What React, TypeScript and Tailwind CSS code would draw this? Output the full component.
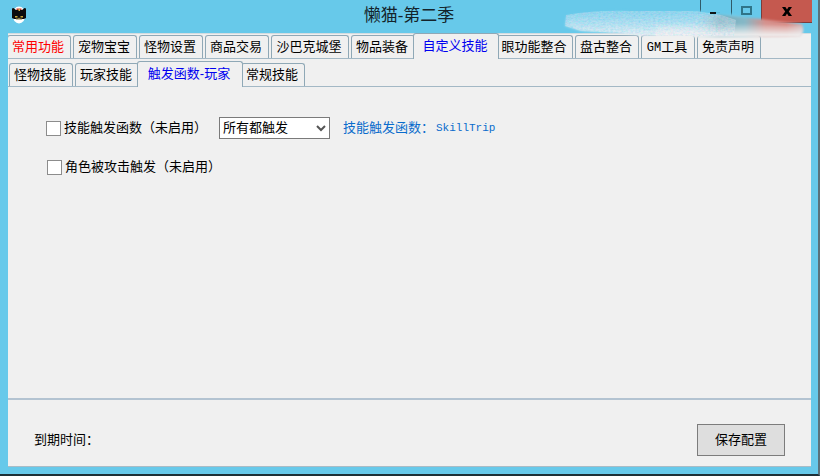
import { useState } from "react";
import type { ReactNode } from "react";
import clsx from "clsx";

type TabItem = {
  id: string;
  label: ReactNode;
  width: string;
  activeWidth: string;
  red?: boolean;
};

const MAIN_TABS: TabItem[] = [
  { id: "common", label: "常用功能", width: "w-16", activeWidth: "w-18", red: true },
  { id: "pet", label: "宠物宝宝", width: "w-16", activeWidth: "w-18" },
  { id: "monster", label: "怪物设置", width: "w-16", activeWidth: "w-18" },
  { id: "trade", label: "商品交易", width: "w-16", activeWidth: "w-18" },
  { id: "castle", label: "沙巴克城堡", width: "w-[78px]", activeWidth: "w-[86px]" },
  { id: "gear", label: "物品装备", width: "w-16", activeWidth: "w-18" },
  { id: "custom", label: "自定义技能", width: "w-[78px]", activeWidth: "w-[86px]" },
  { id: "eye", label: "眼功能整合", width: "w-[76px]", activeWidth: "w-[84px]" },
  { id: "pangu", label: "盘古整合", width: "w-16", activeWidth: "w-18" },
  {
    id: "gm",
    label: (
      <>
        <span className="font-['Liberation_Mono',monospace] text-[12px]">GM</span>工具
      </>
    ),
    width: "w-[54px]",
    activeWidth: "w-[62px]",
  },
  { id: "notice", label: "免责声明", width: "w-16", activeWidth: "w-18" },
];

const SKILL_TABS: TabItem[] = [
  { id: "monster", label: "怪物技能", width: "w-16", activeWidth: "w-18" },
  { id: "player", label: "玩家技能", width: "w-16", activeWidth: "w-18" },
  { id: "trigger", label: "触发函数-玩家", width: "w-[98px]", activeWidth: "w-[106px]" },
  { id: "normal", label: "常规技能", width: "w-16", activeWidth: "w-18" },
];

function TabStrip({
  items,
  initial,
  label,
  className,
}: {
  items: TabItem[];
  initial: string;
  label: string;
  className?: string;
}) {
  const [active, setActive] = useState(initial);

  return (
    <div
      role="tablist"
      aria-label={label}
      className={clsx("flex items-end gap-0.5 border-b border-[#a3b8c5]", className)}
    >
      {items.map((t) => {
        const on = t.id === active;
        return (
          <button
            key={t.id}
            type="button"
            role="tab"
            aria-selected={on}
            onClick={() => setActive(t.id)}
            className={clsx(
              "shrink-0 rounded-t-[3px] border border-b-0 border-[#8fa8b6] bg-[#f0f0f0] pr-0.5 text-center whitespace-nowrap",
              // the selected tab grows over its neighbours and hides the strip's line
              on ? "z-10 -mx-1 -mb-px h-[26px] pb-0.5" : "h-[23px]",
              on ? t.activeWidth : t.width,
              on ? "text-[#0000f0]" : t.red ? "text-[#ff0000]" : "text-black",
            )}
          >
            {t.label}
          </button>
        );
      })}
    </div>
  );
}

function CatIcon() {
  return (
    <svg viewBox="0 0 16 18" className="h-[18px] w-4" aria-hidden="true">
      <ellipse cx="8" cy="9" rx="6.5" ry="8.5" fill="#fff" />
      <path d="M1 2.5 2.5 2l2.5 2h6l2.5-2 1.5.5V12l-2 1H3l-2-1z" fill="#0b0b0d" />
      <path d="M5.5 2.5h5v1.5h-5z" fill="#c23a2a" />
      <path d="M7.5 3h1.5v2H7.5z" fill="#e0b04a" />
      <path d="M4 10h2.5v1.5H4zM9.5 10H12v1.5H9.5z" fill="#c9a63a" />
      <path d="M5 12.5h1.5l1.5-1 1.5 1H11v1H5z" fill="#8a7a40" />
    </svg>
  );
}

// smudged streak that runs under the window buttons
function BrushStroke() {
  return (
    <svg
      viewBox="0 0 250 34"
      className="pointer-events-none absolute top-[6px] right-[12px] z-20 h-[34px] w-[250px]"
      aria-hidden="true"
    >
      <defs>
        <linearGradient id="stroke-left" x1="0" y1="0" x2="0" y2="1">
          <stop offset="0.1" stopColor="#67c9ea" />
          <stop offset="0.5" stopColor="#93d8ee" />
          <stop offset="1" stopColor="#e6eff2" />
        </linearGradient>
        <linearGradient id="stroke-right" x1="0" x2="1">
          <stop offset="0" stopColor="#a5d6e5" stopOpacity="0" />
          <stop offset="0.25" stopColor="#76adbd" />
          <stop offset="0.48" stopColor="#86b8c7" />
          <stop offset="0.66" stopColor="#d5928e" />
          <stop offset="0.85" stopColor="#d98983" />
          <stop offset="1" stopColor="#cdb5b8" />
        </linearGradient>
        <linearGradient id="stroke-fade" x1="0" y1="0" x2="0" y2="1">
          <stop offset="0" stopColor="#f0f0f0" stopOpacity="0" />
          <stop offset="0.85" stopColor="#f0f0f0" stopOpacity="0.95" />
        </linearGradient>
        <filter id="stroke-soft" x="-5%" y="-20%" width="110%" height="140%">
          <feGaussianBlur stdDeviation="1.2" />
        </filter>
        <filter id="stroke-grain" x="0" y="0" width="100%" height="100%">
          <feTurbulence type="fractalNoise" baseFrequency="0.4 0.6" numOctaves="3" seed="11" />
          <feColorMatrix values="1.2 0 0 0 0.1  0 0.6 0 0 0.5  0 0 0.4 0 0.7  0 0 0 0 0.38" />
          <feComposite in2="SourceGraphic" operator="in" />
        </filter>
      </defs>
      <path
        d="M10 9Q40 4 75 5L165 5 190 12 190 30 90 30 60 27 25 25 9 20Z"
        fill="url(#stroke-left)"
        filter="url(#stroke-soft)"
      />
      <path
        d="M135 9 165 9 205 13 246 18Q249 24 244 30L135 31Z"
        fill="url(#stroke-right)"
        filter="url(#stroke-soft)"
      />
      <path
        d="M100 17 165 17 246 20Q249 26 244 31L100 31Z"
        fill="url(#stroke-fade)"
        filter="url(#stroke-soft)"
      />
      <path
        d="M10 9Q40 4 75 5L140 5 165 9 180 14 178 30 90 30 60 27 25 25 9 20Z"
        fill="#fff"
        filter="url(#stroke-grain)"
      />
      <path d="M154 6h6v2h-6z" fill="#101416" />
    </svg>
  );
}

function TitleBar() {
  return (
    <header className="relative flex h-[33px] shrink-0 justify-center">
      <div className="absolute top-[6px] left-[11px]">
        <CatIcon />
      </div>
      <h1 className="text-[17px] leading-8 text-[#14242b]">懒猫-第二季</h1>
      <div className="absolute top-0 right-1.5 flex h-[23px]">
        <button
          type="button"
          aria-label="最小化"
          className="flex w-[31px] justify-center border-l border-[#2f5a69] pt-3"
        >
          <span className="h-0.5 w-2 bg-black" />
        </button>
        <button
          type="button"
          aria-label="最大化"
          className="flex w-[30px] justify-center border-l border-[#2f5a69] pt-1.5"
        >
          <span className="h-[9px] w-[11px] border-2 border-[#2f7488]" />
        </button>
        <button
          type="button"
          aria-label="关闭"
          className="flex w-[51px] items-center justify-center border-b border-l border-[#7a3d3c] bg-[#c5594f]"
        >
          <svg viewBox="0 0 10 9" className="h-[9px] w-2.5" aria-hidden="true">
            <path
              d="M0 0h3.4L5 2.6 6.6 0H10L6.8 4.5 10 9H6.6L5 6.4 3.4 9H0l3.2-4.5z"
              fill="#000"
            />
          </svg>
        </button>
      </div>
      <BrushStroke />
    </header>
  );
}

const CHECKBOX =
  "size-[15px] shrink-0 appearance-none border border-[#8c8c8c] bg-white checked:bg-[#0a6cce]";

function TriggerPanel() {
  return (
    <section className="flex min-h-0 flex-1 flex-col items-start gap-[18px] pt-[30px] pl-[38px]">
      <div className="flex items-center">
        <label className="flex w-[173px] items-center gap-[3px] whitespace-nowrap">
          <input type="checkbox" className={CHECKBOX} />
          技能触发函数（未启用）
        </label>
        <div className="relative flex items-center">
          <select
            aria-label="触发方式"
            className="h-[22px] w-[111px] appearance-none border border-[#7a7a7a] bg-white pl-[3px] leading-5 text-black"
          >
            <option>所有都触发</option>
          </select>
          <svg
            viewBox="0 0 10 7"
            className="pointer-events-none absolute right-1 h-[7px] w-2.5"
            fill="none"
            stroke="#555"
            strokeWidth="2"
            aria-hidden="true"
          >
            <path d="m1 1 4 4 4-4" />
          </svg>
        </div>
        <span className="ml-[13px] flex items-center whitespace-nowrap text-[#0a6ccc]">
          技能触发函数：
          <span className="ml-0.5 font-['Liberation_Mono','Noto_Sans_CJK_SC',monospace] text-[11px]">
            SkillTrip
          </span>
        </span>
      </div>
      <label className="ml-px flex items-center gap-[3px] whitespace-nowrap">
        <input type="checkbox" className={CHECKBOX} />
        角色被攻击触发（未启用）
      </label>
    </section>
  );
}

export default function App() {
  return (
    <div className="flex h-screen flex-col overflow-hidden border-r-2 border-b-2 border-r-[#5a727b] border-b-[#1d3037] bg-[#67c9ea] font-['Liberation_Sans','Noto_Sans_CJK_SC',sans-serif] text-[13px] leading-5 text-black">
      <TitleBar />
      <main className="mr-[7px] mb-[7px] ml-2 flex min-h-0 flex-1 flex-col overflow-hidden border-b border-[#a9bcc6] bg-[#f0f0f0]">
        <TabStrip
          items={MAIN_TABS}
          initial="custom"
          label="功能分类"
          className="-ml-px h-[26px] shrink-0 border-t border-t-[#d3dce0]"
        />
        <TabStrip
          items={SKILL_TABS}
          initial="trigger"
          label="技能分类"
          className="h-7 shrink-0 pl-px"
        />
        <TriggerPanel />
        <footer className="flex h-[68px] shrink-0 items-center justify-between border-t-2 border-[#b3c3d1] pt-3.5 pr-[26px] pl-[26px]">
          <span>到期时间：</span>
          <button
            type="button"
            className="h-8 w-[88px] border border-[#7c7c7c] bg-[#dedede] text-center"
          >
            保存配置
          </button>
        </footer>
      </main>
    </div>
  );
}
